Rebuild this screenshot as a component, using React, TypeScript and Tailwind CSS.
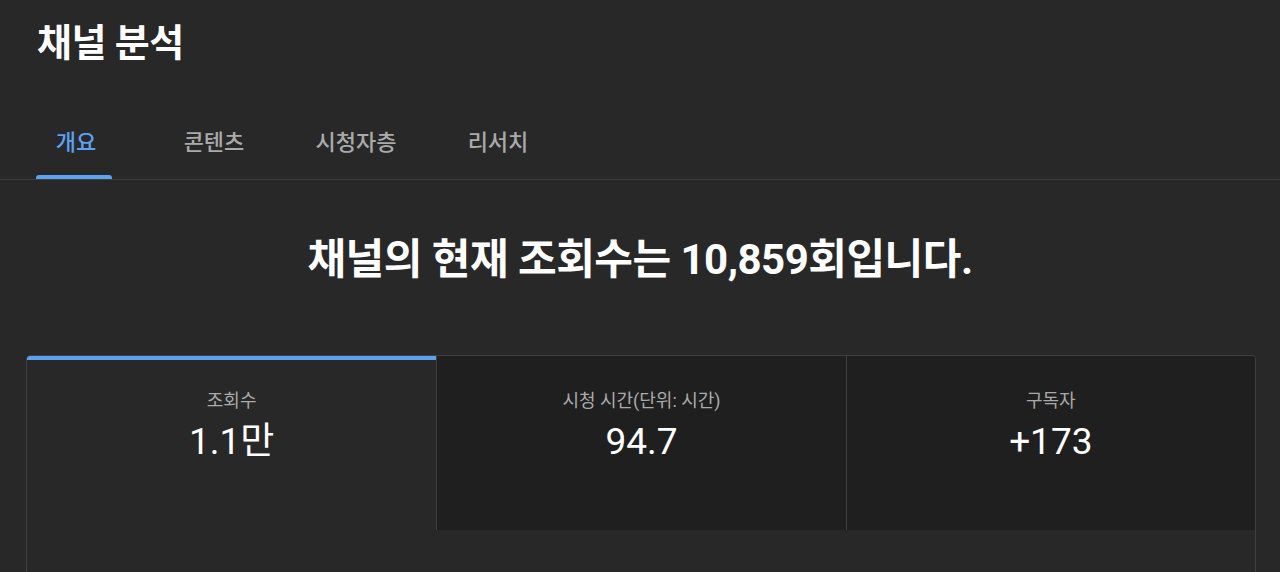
import React from 'react';

const tabs = [
  { label: '개요', active: true, cls: 'w-[76px] mr-[20px]' },
  { label: '콘텐츠', active: false, cls: 'w-[100px]' },
  { label: '시청자층', active: false, cls: 'w-[120px]' },
  { label: '리서치', active: false, cls: 'w-[100px]' },
];

const stats = [
  { label: '조회수', value: '1.1만', active: true },
  { label: '시청 시간(단위: 시간)', value: '94.7', active: false },
  { label: '구독자', value: '+173', active: false },
];

export default function App() {
  return (
    <div className="w-[1280px] h-[572px] overflow-hidden bg-[#282828] text-white font-['Roboto','Noto_Sans_CJK_KR',sans-serif]">
      {/* Header + tabs */}
      <div className="border-b border-[#3e3e3e]">
        <h1 className="pl-[37px] pt-[19px] text-[38px] leading-[48px] font-bold tracking-[-0.5px]">채널 분석</h1>
        <div className="flex gap-[32px] pl-[36px] mt-[62px]">
          {tabs.map((t) => (
            <div key={t.label} className={`flex flex-col items-center ${t.cls}`}>
              <span className={`text-[22px] leading-[28px] font-medium whitespace-nowrap ${t.active ? 'text-[#5aa3f0] pl-[4px]' : 'text-[#aaaaaa]'}`}>
                {t.label}
              </span>
              <div className={`mt-[18px] h-[4px] w-full rounded-t-[3px] ${t.active ? 'bg-[#5aa3f0]' : 'bg-transparent'}`}></div>
            </div>
          ))}
        </div>
      </div>

      {/* Headline */}
      <h2 className="text-center text-[42px] leading-[56px] font-bold mt-[52px] tracking-[-0.5px]">
        채널의 현재 조회수는 10,859회입니다.
      </h2>

      {/* Stats card */}
      <div className="ml-[26px] mr-[24px] mt-[67px] h-[300px] rounded-[4px] border border-[#404040] overflow-hidden">
        <div className="grid grid-cols-3 h-[174px]">
          {stats.map((s, i) => (
            <div
              key={s.label}
              className={`flex flex-col items-center ${s.active ? 'bg-[#282828] border-t-[4px] border-t-[#5aa3f0] pt-[29px]' : 'bg-[#1f1f1f] pt-[33px]'} ${i > 0 ? 'border-l border-[#404040]' : ''}`}
            >
              <span className="text-[18px] leading-[24px] text-[#aaaaaa]">{s.label}</span>
              <span className="text-[37px] leading-[44px] mt-[7px]">{s.value}</span>
            </div>
          ))}
        </div>
      </div>
    </div>
  );
}
